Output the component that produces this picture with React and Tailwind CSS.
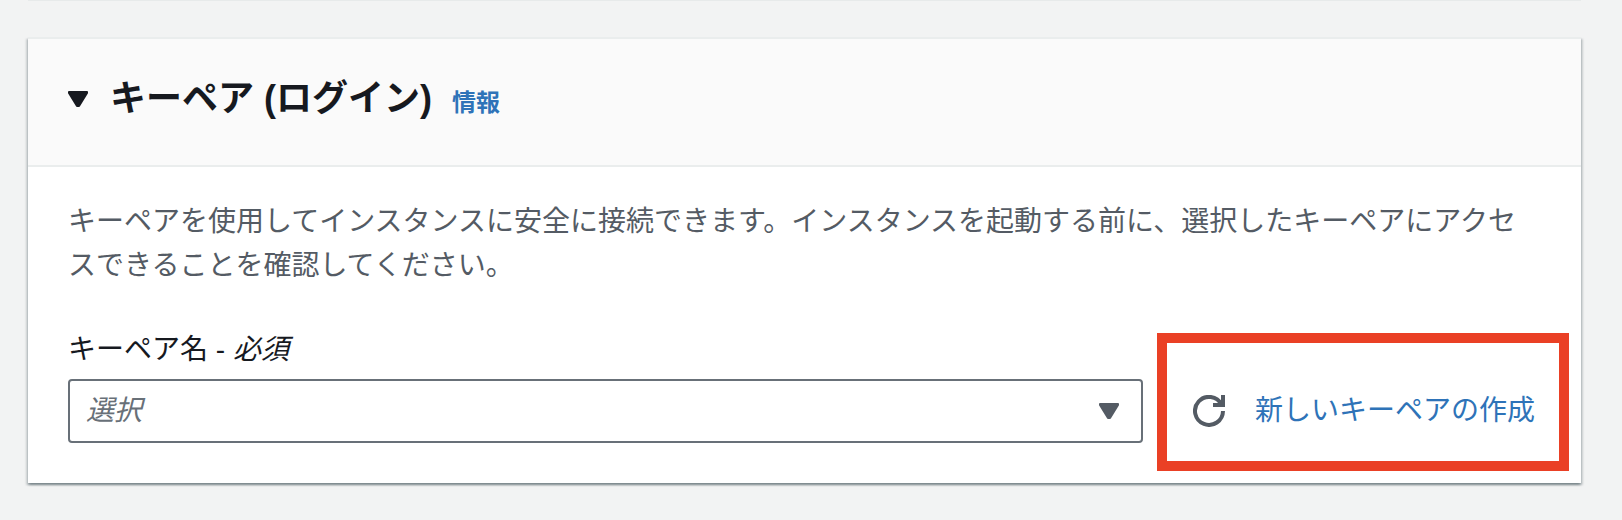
import { useState } from "react";

function Triangle({ className }) {
  return (
    <svg viewBox="0 0 20 16" className={className} aria-hidden="true">
      <path d="M1 1h18v1L11 15H9L1 2z" fill="currentColor" stroke="currentColor" strokeWidth="2" strokeLinejoin="round" />
    </svg>
  );
}

function RefreshIcon() {
  return (
    <svg viewBox="0 0 32 32" className="size-8" fill="none" stroke="currentColor" strokeWidth="4" aria-hidden="true">
      <path d="M30 16A14 14 0 1 1 28.5 9.6" />
      <path d="M30 0v10H20" />
    </svg>
  );
}

export default function App() {
  const [open, setOpen] = useState(true);

  return (
    <div className="min-h-screen bg-[#f2f3f3] pr-[41px] pb-9 pl-7 font-['Liberation_Sans','Noto_Sans_CJK_JP',sans-serif] text-[28px] leading-[44px] text-[#16191f]">
      <div className="mb-9 h-px bg-[#e7eaea]" />
      <section className="border-t-2 border-[#eaeded] bg-white shadow-[0_2px_2px_0_rgba(0,28,36,0.3),2px_2px_2px_0_rgba(0,28,36,0.15),-2px_2px_2px_0_rgba(0,28,36,0.15)]">
        <header className="flex items-baseline gap-5 border-b-2 border-[#eaeded] bg-[#fafafa] px-10 pt-[38px] pb-11">
          <h2 className="font-bold">
            <button type="button" aria-expanded={open} onClick={() => setOpen(!open)} className="flex items-baseline gap-[22px] text-[36px] leading-[44px]">
              <Triangle className="h-4 w-5 self-center" />
              <span>キーペア (ログイン)</span>
            </button>
          </h2>
          <a href="#info" className="text-2xl leading-9 font-bold text-[#2e73b8]">情報</a>
        </header>
        {open && (
          <div className="px-10 pt-[33px] pb-10">
            <p className="text-[#545b64]">
              キーペアを使用してインスタンスに安全に接続できます。インスタンスを起動する前に、選択したキーペアにアクセスできることを確認してください。
            </p>
            <label htmlFor="key-pair" className="mt-10 mb-[7px] block">
              キーペア名 - <em>必須</em>
            </label>
            <div className="flex items-center gap-[50px]">
              <div className="grid flex-1 items-center">
                <select id="key-pair" defaultValue="" className="col-start-1 row-start-1 h-16 w-full appearance-none rounded border-2 border-[#687078] bg-white px-4 text-[#687078] italic">
                  <option value="">選択</option>
                </select>
                <Triangle className="pointer-events-none col-start-1 row-start-1 mr-6 h-4 w-5 justify-self-end text-[#545b64]" />
              </div>
              <div className="relative flex h-16 items-center gap-[30px] pr-1.5">
                <button type="button" aria-label="更新" className="text-[#545b64]">
                  <RefreshIcon />
                </button>
                <a href="#create-key-pair" className="whitespace-nowrap text-[#2e73b8]">新しいキーペアの作成</a>
                <div className="pointer-events-none absolute -top-[46px] -right-7 -bottom-7 -left-9 border-[10px] border-[#ea4025]" />
              </div>
            </div>
          </div>
        )}
      </section>
    </div>
  );
}
